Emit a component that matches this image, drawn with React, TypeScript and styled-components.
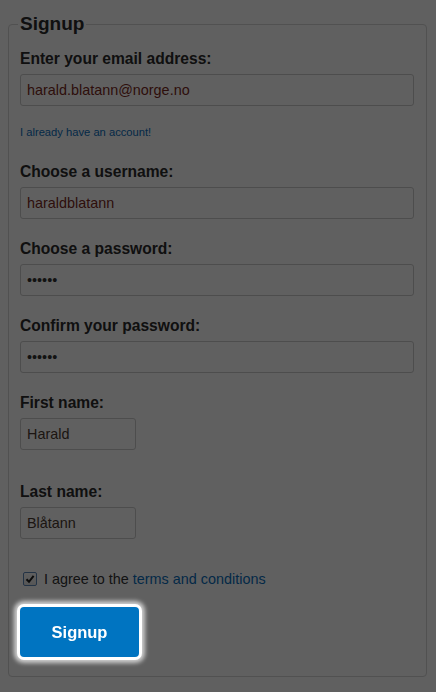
import React from "react";
import styled, { createGlobalStyle } from "styled-components";

const GlobalStyle = createGlobalStyle`
  html, body {
    margin: 0;
    padding: 0;
    background: #ffffff;
    font-family: "Liberation Sans", Arial, sans-serif;
  }
`;

const Page = styled.div`
  padding: 13px 9px 15px 8px;
`;

const Fieldset = styled.fieldset`
  margin: 0;
  padding: 15px 12px 19px 11px;
  border: 1px solid #d6d6d6;
  border-radius: 4px;
  min-width: 0;
`;

const Legend = styled.legend`
  margin-left: -2px;
  padding: 0 2px;
  font-size: 19px;
  line-height: 22px;
  font-weight: bold;
  color: #2b2b2b;
`;

const Field = styled.div<{ $after?: number }>`
  display: flex;
  flex-direction: column;
  align-items: flex-start;
  margin-bottom: ${(p) => p.$after ?? 21}px;
`;

const Label = styled.label`
  display: block;
  font-size: 15.6px;
  line-height: 18px;
  font-weight: bold;
  color: #2b2b2b;
  margin-bottom: 6px;
`;

const Input = styled.input<{ $short?: boolean; $tone?: string }>`
  box-sizing: border-box;
  width: ${(p) => (p.$short ? "116px" : "100%")};
  height: 32px;
  margin: 0;
  padding: 0 6px;
  border: 1px solid #cccccc;
  border-radius: 3px;
  background: #ffffff;
  font-family: "Liberation Sans", Arial, sans-serif;
  font-size: 14.4px;
  color: ${(p) => p.$tone ?? "#555"};
  outline: none;
`;

const SmallLink = styled.a`
  display: block;
  margin: 18px 0 2px;
  font-size: 11.2px;
  line-height: 16px;
  color: #0a6ebd;
  text-decoration: none;
`;

const AgreeRow = styled.div`
  display: flex;
  align-items: center;
  height: 20px;
  padding-left: 3px;
  font-size: 14.4px;
  color: #333;
`;

const CheckBox = styled.span`
  box-sizing: border-box;
  display: inline-flex;
  align-items: center;
  justify-content: center;
  width: 14px;
  height: 14px;
  margin-right: 7px;
  border: 1px solid #5f87b8;
  border-radius: 2px;
  background: linear-gradient(#fdfdfd, #e4e4e4);
`;

const TextLink = styled.a`
  color: #0a6ebd;
  text-decoration: none;
  margin-left: 4px;
`;

const Overlay = styled.div`
  position: fixed;
  inset: 0;
  background: rgba(0, 0, 0, 0.625);
  z-index: 1;
`;

const SubmitButton = styled.button`
  position: relative;
  z-index: 2;
  display: block;
  width: 119px;
  height: 50px;
  margin-top: 18px;
  border: none;
  border-radius: 4px;
  background: #0074c1;
  color: #ffffff;
  font-family: "Liberation Sans", Arial, sans-serif;
  font-size: 16.5px;
  font-weight: bold;
  box-shadow: 0 0 0 3px #ffffff, 0 0 4px 6px rgba(255, 255, 255, 0.7);
  cursor: pointer;
`;

export default function App() {
  return (
    <>
      <GlobalStyle />
      <Page>
        <Fieldset>
          <Legend>Signup</Legend>
          <Field>
            <Label>Enter your email address:</Label>
            <Input type="text" defaultValue="harald.blatann@norge.no" $tone="#7a2a22" readOnly />
            <SmallLink href="#">I already have an account!</SmallLink>
          </Field>
          <Field>
            <Label>Choose a username:</Label>
            <Input type="text" defaultValue="haraldblatann" $tone="#7a2a22" readOnly />
          </Field>
          <Field>
            <Label>Choose a password:</Label>
            <Input type="password" defaultValue="secret" $tone="#333" readOnly />
          </Field>
          <Field>
            <Label>Confirm your password:</Label>
            <Input type="password" defaultValue="secret" $tone="#333" readOnly />
          </Field>
          <Field $after={33}>
            <Label>First name:</Label>
            <Input type="text" defaultValue="Harald" $short $tone="#4a3a30" readOnly />
          </Field>
          <Field $after={30}>
            <Label>Last name:</Label>
            <Input type="text" defaultValue="Blåtann" $short $tone="#4a3a30" readOnly />
          </Field>
          <AgreeRow>
            <CheckBox>
              <svg width="10" height="10" viewBox="0 0 10 10">
                <path d="M1.5 5.2 L4 7.8 L8.6 1.8" fill="none" stroke="#222" strokeWidth="2" />
              </svg>
            </CheckBox>
            I agree to the
            <TextLink href="#">terms and conditions</TextLink>
          </AgreeRow>
          <SubmitButton type="button">Signup</SubmitButton>
        </Fieldset>
      </Page>
      <Overlay />
    </>
  );
}
